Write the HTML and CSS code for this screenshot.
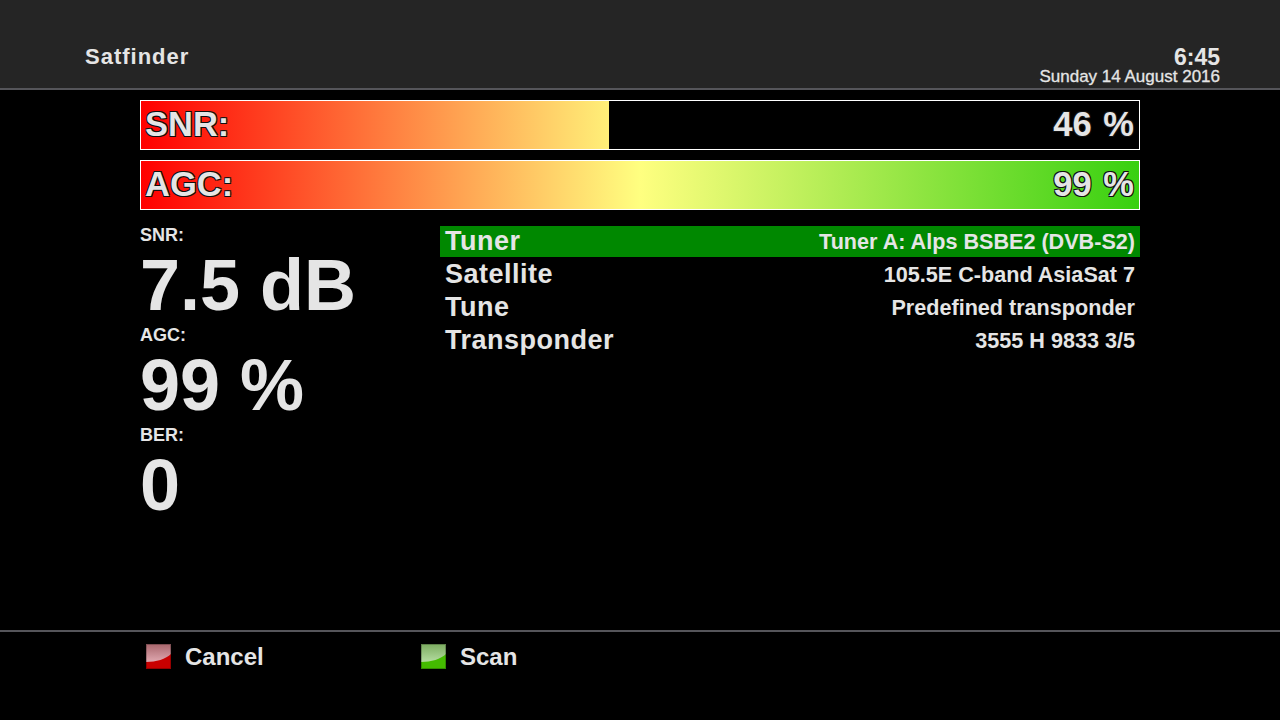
FILE: index.html
```html
<!DOCTYPE html>
<html lang="en">
<head>
    <meta charset="UTF-8">
    <title>Satfinder</title>
    <link rel="stylesheet" href="styles.css">
</head>
<body>
    <div class="header">
        <div class="title">Satfinder</div>
        <div class="clock">
            <div class="time">6:45</div>
            <div class="date">Sunday 14 August 2016</div>
        </div>
    </div>

    <div class="main">
        <div class="bar">
            <div class="bar-fill" style="width: 46.9%"></div>
            <span class="bar-label">SNR:</span>
            <span class="bar-value">46 %</span>
        </div>
        <div class="bar">
            <div class="bar-fill" style="width: 100%"></div>
            <span class="bar-label">AGC:</span>
            <span class="bar-value">99 %</span>
        </div>

        <div class="content">
            <div class="stats">
                <div class="stat-label">SNR:</div>
                <div class="stat-value">7.5 dB</div>
                <div class="stat-label">AGC:</div>
                <div class="stat-value">99 %</div>
                <div class="stat-label">BER:</div>
                <div class="stat-value">0</div>
            </div>
            <div class="config">
                <div class="config-row selected">
                    <span class="config-name">Tuner</span>
                    <span class="config-value">Tuner A: Alps BSBE2 (DVB-S2)</span>
                </div>
                <div class="config-row">
                    <span class="config-name">Satellite</span>
                    <span class="config-value">105.5E C-band AsiaSat 7</span>
                </div>
                <div class="config-row">
                    <span class="config-name">Tune</span>
                    <span class="config-value">Predefined transponder</span>
                </div>
                <div class="config-row">
                    <span class="config-name">Transponder</span>
                    <span class="config-value">3555 H 9833 3/5</span>
                </div>
            </div>
        </div>
    </div>

    <div class="footer">
        <div class="key key-cancel">
            <svg class="key-icon" viewBox="0 0 25 25">
                <defs>
                    <linearGradient id="gloss-red" x1="0" y1="0" x2="0" y2="1">
                        <stop offset="0" stop-color="#a8666c"/>
                        <stop offset="1" stop-color="#e0a8b0"/>
                    </linearGradient>
                </defs>
                <rect width="25" height="25" fill="#c80000"/>
                <path d="M0 0H25V10C20 15 10 18 0 18Z" fill="url(#gloss-red)"/>
                <rect x="0.5" y="0.5" width="24" height="24" fill="none" stroke="#000" stroke-opacity="0.25"/>
            </svg>
            <span>Cancel</span>
        </div>
        <div class="key key-scan">
            <svg class="key-icon" viewBox="0 0 25 25">
                <defs>
                    <linearGradient id="gloss-green" x1="0" y1="0" x2="0" y2="1">
                        <stop offset="0" stop-color="#7cac60"/>
                        <stop offset="1" stop-color="#b4dca0"/>
                    </linearGradient>
                </defs>
                <rect width="25" height="25" fill="#44bb00"/>
                <path d="M0 0H25V10C20 15 10 18 0 18Z" fill="url(#gloss-green)"/>
                <rect x="0.5" y="0.5" width="24" height="24" fill="none" stroke="#000" stroke-opacity="0.25"/>
            </svg>
            <span>Scan</span>
        </div>
    </div>
</body>
</html>
```

FILE: styles.css
```css
html, body {
    margin: 0;
    padding: 0;
}
body {
    width: 1280px;
    height: 720px;
    overflow: hidden;
    background-color: #000;
    color: #e5e5e5;
    font-family: 'Liberation Sans', Arial, sans-serif;
    font-weight: bold;
    display: flex;
    flex-direction: column;
}
.header {
    height: 88px;
    flex: none;
    background-color: #252525;
    border-bottom: 2px solid #55555a;
    display: flex;
    justify-content: space-between;
    align-items: flex-end;
    padding: 0 60px 0 85px;
}
.title {
    font-size: 22px;
    line-height: 26px;
    letter-spacing: 1px;
    margin-bottom: 18px;
}
.clock {
    text-align: right;
    margin-bottom: 1px;
}
.time {
    font-size: 23px;
    line-height: 20px;
}
.date {
    font-size: 17px;
    line-height: 20px;
    font-weight: normal;
    -webkit-text-stroke: 0.3px #e5e5e5;
}
.main {
    flex: 1;
    padding: 10px 140px 0;
}
.bar {
    position: relative;
    box-sizing: border-box;
    height: 50px;
    margin-bottom: 10px;
    border: 1px solid #fff;
    display: flex;
    justify-content: space-between;
    align-items: center;
    padding: 0 5px 2px 4px;
    font-size: 34.5px;
    word-spacing: 2px;
    text-shadow: -1px -1px 0 #111, 1px -1px 0 #111, -1px 1px 0 #111, 1px 1px 0 #111;
}
.bar-fill {
    position: absolute;
    top: 0;
    left: 0;
    bottom: 0;
    background-image: linear-gradient(to right, #ff0000 0, #ffff80 499px, #38d010 998px);
    background-size: 998px 100%;
    background-repeat: no-repeat;
}
.bar-label, .bar-value {
    position: relative;
}
.content {
    display: flex;
    margin-top: 16px;
}
.stats {
    width: 300px;
    flex: none;
}
.stat-label {
    font-size: 18px;
    line-height: 18px;
}
.stat-value {
    font-size: 72px;
    line-height: 82px;
}
.config {
    flex: 1;
}
.config-row {
    height: 33px;
    display: flex;
    justify-content: space-between;
    align-items: center;
    padding: 0 5px;
}
.config-row.selected {
    box-sizing: border-box;
    height: 31px;
    padding-bottom: 2px;
    background-color: #008800;
}
.config-name {
    font-size: 27px;
    letter-spacing: 0.5px;
    padding-top: 1px;
}
.config-value {
    font-size: 21.6px;
    padding-top: 2px;
}
.footer {
    height: 76px;
    flex: none;
    border-top: 2px solid #55555a;
    display: flex;
    align-items: flex-start;
    padding: 12px 0 0 146px;
}
.key {
    display: flex;
    align-items: center;
    width: 275px;
    font-size: 24px;
    line-height: 25px;
}
.key-icon {
    width: 25px;
    height: 25px;
    margin-right: 14px;
}
```
